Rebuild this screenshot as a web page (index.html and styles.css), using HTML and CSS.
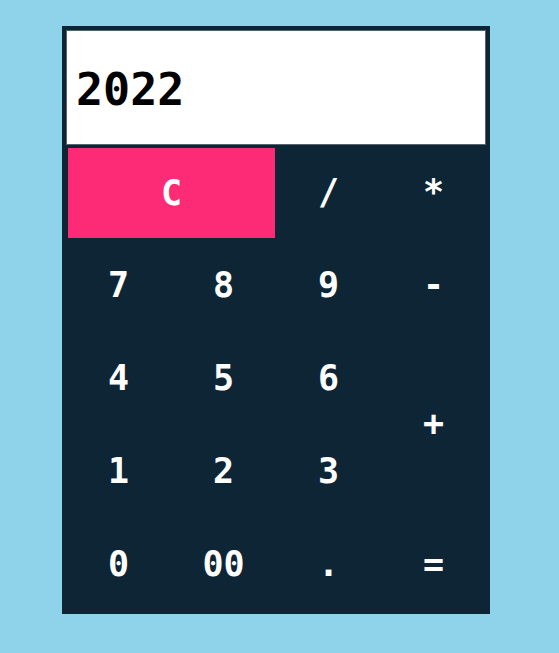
FILE: index.html
```html
<!DOCTYPE html>
<html>
<head>
<meta charset="utf-8">
<link rel="stylesheet" href="styles.css">
</head>
<body>
<div class="calc">
  <div class="display">2022</div>
  <div class="keys">
    <button class="key clear">C</button>
    <button class="key">/</button>
    <button class="key">*</button>
    <button class="key">7</button>
    <button class="key">8</button>
    <button class="key">9</button>
    <button class="key">-</button>
    <button class="key">4</button>
    <button class="key">5</button>
    <button class="key">6</button>
    <button class="key plus">+</button>
    <button class="key">1</button>
    <button class="key">2</button>
    <button class="key">3</button>
    <button class="key">0</button>
    <button class="key">00</button>
    <button class="key">.</button>
    <button class="key">=</button>
  </div>
</div>
</body>
</html>
```
FILE: styles.css
```css
html, body {
  margin: 0;
  padding: 0;
  background: #8fd3ea;
  height: 100%;
}
body {
  padding-top: 26px;
  box-sizing: border-box;
}
.calc {
  width: 428px;
  margin-left: 62px;
  padding: 4px;
  box-sizing: border-box;
  background: #0e2536;
}
.display {
  height: 115px;
  box-sizing: border-box;
  background: #fff;
  border: 1px solid #56646e;
  display: flex;
  align-items: center;
  padding-left: 9px;
  padding-top: 3px;
  font-family: "DejaVu Sans Mono", monospace;
  font-weight: bold;
  font-size: 45px;
  color: #000;
}
.keys {
  display: grid;
  grid-template-columns: repeat(4, 1fr);
  grid-template-rows: repeat(5, 1fr);
  height: 465px;
}
.key {
  background: transparent;
  border: none;
  color: #fff;
  font-family: "DejaVu Sans Mono", monospace;
  font-weight: bold;
  font-size: 35px;
  margin: 0;
  padding: 0;
  cursor: pointer;
}
.clear {
  grid-column: span 2;
  background: #fd2a75;
  margin: 3px 1px 0 2px;
}
.plus {
  grid-column: 4;
  grid-row: 3 / span 2;
}
```
